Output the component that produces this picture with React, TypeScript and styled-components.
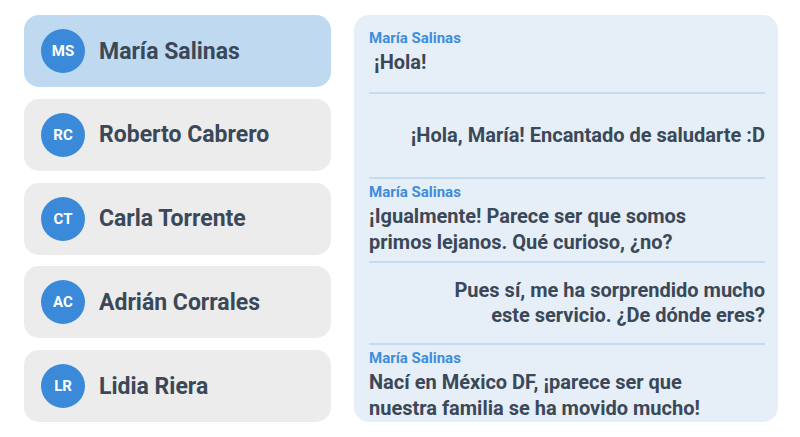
import React from "react";
import styled, { createGlobalStyle } from "styled-components";

const GlobalStyle = createGlobalStyle`
  * { box-sizing: border-box; }
  html, body { margin: 0; padding: 0; background: #ffffff; }
  body { font-family: Roboto, "Noto Sans", "Liberation Sans", sans-serif; }
`;

const Page = styled.div`
  display: grid;
  grid-template-columns: 307px 424px;
  column-gap: 23px;
  padding: 15px 22px 15px 24px;
  height: 437px;
`;

const ContactList = styled.div`
  display: flex;
  flex-direction: column;
  justify-content: space-between;
  height: 407px;
`;

const ContactCard = styled.div<{ $active?: boolean }>`
  display: flex;
  align-items: center;
  gap: 14px;
  height: 72px;
  padding-left: 17px;
  border-radius: 15px;
  background: ${(p) => (p.$active ? "#bfdaf0" : "#ececec")};
`;

const Avatar = styled.div`
  flex: none;
  width: 44px;
  height: 44px;
  border-radius: 50%;
  background: #3a8ad9;
  color: #ffffff;
  display: flex;
  align-items: center;
  justify-content: center;
  font-size: 15px;
  font-weight: 700;
`;

const ContactName = styled.span`
  font-size: 23px;
  font-weight: 700;
  color: #3a4858;
`;

const Thread = styled.div`
  height: 407px;
  border-radius: 15px;
  background: #e6eef7;
  padding: 10px 13px 0 15px;
  overflow: hidden;
  display: flex;
  flex-direction: column;
`;

const Message = styled.div<{ $mine?: boolean; $first?: boolean; $single?: boolean }>`
  display: flex;
  flex-direction: column;
  align-items: ${(p) => (p.$mine ? "flex-end" : "flex-start")};
  justify-content: ${(p) => (p.$mine ? "center" : "flex-start")};
  border-top: ${(p) => (p.$first ? "none" : "2px solid #c4dcf0")};
  padding: ${(p) => (p.$mine ? "14.5px 0" : "5px 0 6px")};
  min-height: ${(p) => (p.$mine ? (p.$single ? "85px" : "0") : "67px")};
  flex: none;
`;

const Sender = styled.div`
  font-size: 15px;
  line-height: 16px;
  font-weight: 700;
  color: #3d8ddb;
  margin-bottom: 4px;
`;

const Body = styled.div<{ $mine?: boolean }>`
  font-size: 20px;
  line-height: 25.5px;
  font-weight: 700;
  color: #3a4858;
  text-align: ${(p) => (p.$mine ? "right" : "left")};
  white-space: nowrap;
`;

const contacts = [
  { initials: "MS", name: "María Salinas", active: true },
  { initials: "RC", name: "Roberto Cabrero" },
  { initials: "CT", name: "Carla Torrente" },
  { initials: "AC", name: "Adrián Corrales" },
  { initials: "LR", name: "Lidia Riera" },
];

const messages: { mine: boolean; lines: string[] }[] = [
  { mine: false, lines: ["\u00a0¡Hola!"] },
  { mine: true, lines: ["¡Hola, María! Encantado de saludarte :D"] },
  { mine: false, lines: ["¡Igualmente! Parece ser que somos", "primos lejanos. Qué curioso, ¿no?"] },
  { mine: true, lines: ["Pues sí, me ha sorprendido mucho", "este servicio. ¿De dónde eres?"] },
  { mine: false, lines: ["Nací en México DF, ¡parece ser que", "nuestra familia se ha movido mucho!"] },
];

export default function App() {
  return (
    <>
      <GlobalStyle />
      <Page>
        <ContactList>
          {contacts.map((c) => (
            <ContactCard key={c.initials} $active={c.active}>
              <Avatar>{c.initials}</Avatar>
              <ContactName>{c.name}</ContactName>
            </ContactCard>
          ))}
        </ContactList>
        <Thread>
          {messages.map((m, i) => (
            <Message key={i} $mine={m.mine} $first={i === 0} $single={m.lines.length === 1}>
              {!m.mine && <Sender>María Salinas</Sender>}
              <Body $mine={m.mine}>
                {m.lines.map((l, j) => (
                  <React.Fragment key={j}>
                    {j > 0 && <br />}
                    {l}
                  </React.Fragment>
                ))}
              </Body>
            </Message>
          ))}
        </Thread>
      </Page>
    </>
  );
}
